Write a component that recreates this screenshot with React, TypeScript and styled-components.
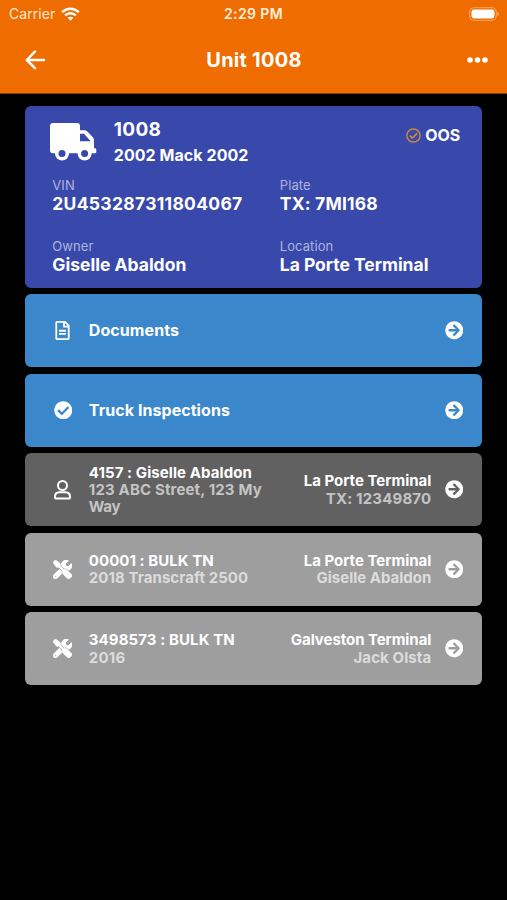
import React from "react";
import styled, { createGlobalStyle } from "styled-components";
import {
  FaArrowCircleRight,
  FaCheckCircle,
  FaRegCheckCircle,
  FaRegFileAlt,
  FaTools,
} from "react-icons/fa";

const GlobalStyle = createGlobalStyle`
  * { box-sizing: border-box; }
  html, body { margin: 0; background: #000; }
  body { font-family: Inter, "Liberation Sans", sans-serif; color: #fff; }
  svg { display: block; flex: none; }
`;

const Screen = styled.div`
  width: 507px;
  height: 900px;
  overflow: hidden;
  background: #000;
`;

const Header = styled.header`
  height: 94px;
  background: #ef6c00;
  border-bottom: 1px solid #8a4000;
`;

const StatusBar = styled.div`
  height: 27px;
  display: grid;
  grid-template-columns: 1fr auto 1fr;
  align-items: center;
  padding: 0 7px 0 9px;
`;

const Carrier = styled.div`
  display: flex;
  align-items: center;
  gap: 6px;
`;

const Battery = styled.div`
  justify-self: end;
`;

const NavBar = styled.div`
  height: 66px;
  display: grid;
  grid-template-columns: 1fr auto 1fr;
  align-items: center;
  padding: 0 19px 0 25px;
`;

const MenuDots = styled.div`
  justify-self: end;
`;

type TextProps = { $size: number; $weight?: number; $track?: number; $color?: string; $line?: number };

const Label = styled.span<TextProps>`
  display: block;
  width: fit-content;
  white-space: nowrap;
  font-size: ${(p) => p.$size}px;
  font-weight: ${(p) => p.$weight ?? 700};
  letter-spacing: ${(p) => p.$track ?? 0}px;
  color: ${(p) => p.$color ?? "#fff"};
  line-height: ${(p) => p.$line ?? 20}px;
`;

const StatusTime = styled(Label)`
  margin-right: 2px;
`;

const NavTitle = styled(Label)`
  margin-right: 5px;
`;

const Content = styled.main`
  display: flex;
  flex-direction: column;
  gap: 6.2px;
  padding: 12.2px 24.7px 0 25.3px;
`;

const UnitCard = styled.section`
  height: 181.7px;
  border-radius: 6px;
  background: #3949ab;
  padding: 13px 22px 0 24px;
`;

const UnitHead = styled.div`
  display: flex;
  height: 57px;
`;

const UnitName = styled.div`
  flex: 1;
  padding: 1px 0 0 16px;
`;

const Status = styled.div`
  display: flex;
  align-items: center;
  gap: 4px;
  height: 32px;
`;

const Fields = styled.div`
  display: grid;
  grid-template-columns: 227.5px 1fr;
  row-gap: 26px;
  padding-left: 3px;
`;

const Field = styled.div`
  height: 35px;
`;

const Row = styled.section<{ $bg: string }>`
  height: 73.3px;
  border-radius: 6px;
  background: ${(p) => p.$bg};
  display: flex;
  align-items: center;
  padding: 0 19px 0 27px;
`;

const RowIcon = styled.div`
  width: 21px;
  display: flex;
  justify-content: center;
`;

const RowMain = styled.div`
  flex: 1;
  padding-left: 15.5px;
`;

const RowSide = styled.div`
  display: flex;
  flex-direction: column;
  align-items: flex-end;
  margin-right: 13.5px;
`;

const ToolsIcon = styled(FaTools)`
  width: 19px;
  height: 19px;
  stroke: #fff;
  stroke-width: 22px;
  stroke-linejoin: round;
`;

const TruckIcon = styled.svg`
  margin: 4px 0 0 0.5px;
`;

const WifiIcon = () => (
  <svg width="19" height="14" viewBox="0 0 19 14" fill="none" stroke="#fff" strokeWidth="2.5">
    <path d="M1.2 5.2C6 .5 13 .5 17.8 5.2M4.2 8.4C7.2 5.5 11.8 5.5 14.8 8.4" />
    <path d="M9.5 13.7L6.6 10.8Q9.5 8.5 12.4 10.8Z" fill="#fff" stroke="none" />
  </svg>
);

const BatteryIcon = () => (
  <svg width="31" height="14" viewBox="0 0 31 14">
    <rect x=".7" y=".7" width="26.6" height="12.6" rx="4" fill="none" stroke="#fff" strokeOpacity=".4" />
    <rect x="2.5" y="2.5" width="23" height="9" rx="2.4" fill="#fff" />
    <path d="M28.5 4.8Q31.2 7 28.5 9.2Z" fill="#fff" fillOpacity=".5" />
  </svg>
);

const BackIcon = () => (
  <svg width="21" height="20" viewBox="0 0 21 20" fill="none" stroke="#fff" strokeWidth="2.5" strokeLinecap="round" strokeLinejoin="round">
    <path d="M10 1.5L1.8 10L10 18.2M2 10H19" />
  </svg>
);

const DotsIcon = () => (
  <svg width="21" height="6" viewBox="0 0 21 6" fill="#fff">
    <circle cx="3" cy="3" r="2.8" />
    <circle cx="10.5" cy="3" r="2.8" />
    <circle cx="18" cy="3" r="2.8" />
  </svg>
);

const Truck = () => (
  <TruckIcon width="48" height="39" viewBox="0 0 48 39" fill="#fff">
    <path
      fillRule="evenodd"
      d="M3 0H27Q30 0 30 3V7.3H34.2Q36 7.3 37.3 8.6L42.7 14Q44 15.3 44 17.1V25.3H45Q46.3 25.3 46.3 26.6V29Q46.3 30.3 45 30.3H3Q0 30.3 0 27.3V3Q0 0 3 0ZM30 10.8V18.3H40.7L34 10.8Z"
    />
    <circle cx="12" cy="30.5" r="7" />
    <circle cx="34.6" cy="30.5" r="7" />
    <circle cx="12" cy="30.5" r="3.5" fill="#3949ab" />
    <circle cx="34.6" cy="30.5" r="3.5" fill="#3949ab" />
  </TruckIcon>
);

const PersonIcon = () => (
  <svg width="18" height="20" viewBox="0 0 18 20" fill="none" stroke="#fff" strokeWidth="2" strokeLinejoin="round">
    <circle cx="8.5" cy="5.5" r="4.5" />
    <path d="M5.3 12.3H11.7Q16 12.6 16 16.6V17.4Q16 18.6 14.8 18.6H2.2Q1 18.6 1 17.4V16.6Q1 12.6 5.3 12.3Z" />
  </svg>
);

type Line = [text: string, track: number];

type Item = {
  icon: React.ReactNode;
  bg: string;
  title: Line;
  sub?: Line[];
  side?: [Line, Line];
  muted?: string;
  titleSize?: number;
};

const items: Item[] = [
  { icon: <FaRegFileAlt size={19} />, bg: "#3a87cc", title: ["Documents", 0.08], titleSize: 16 },
  { icon: <FaCheckCircle size={18.5} />, bg: "#3a87cc", title: ["Truck Inspections", 0.06], titleSize: 16 },
  {
    icon: <PersonIcon />,
    bg: "#616161",
    title: ["4157 : Giselle Abaldon", 0.08],
    sub: [["123 ABC Street, 123 My", 0.15], ["Way", -0.2]],
    side: [["La Porte Terminal", 0], ["TX: 12349870", 0.17]],
    muted: "#c4c4c4",
  },
  {
    icon: <ToolsIcon />,
    bg: "#9e9e9e",
    title: ["00001 : BULK TN", 0.05],
    sub: [["2018 Transcraft 2500", 0.07]],
    side: [["La Porte Terminal", 0], ["Giselle Abaldon", 0]],
    muted: "#dcdcdc",
  },
  {
    icon: <ToolsIcon />,
    bg: "#9e9e9e",
    title: ["3498573 : BULK TN", 0.1],
    sub: [["2016", 0.2]],
    side: [["Galveston Terminal", -0.06], ["Jack Olsta", 0.1]],
    muted: "#dcdcdc",
  },
];

const fields: { name: string; value: string; track: number }[] = [
  { name: "VIN", value: "2U453287311804067", track: 0.3 },
  { name: "Plate", value: "TX: 7MI168", track: 0.18 },
  { name: "Owner", value: "Giselle Abaldon", track: 0 },
  { name: "Location", value: "La Porte Terminal", track: -0.02 },
];

export default function App() {
  return (
    <Screen>
      <GlobalStyle />
      <Header>
        <StatusBar>
          <Carrier>
            <Label $size={14} $weight={400} $track={0.05} $color="#ffe9cf">Carrier</Label>
            <WifiIcon />
          </Carrier>
          <StatusTime $size={14} $weight={600} $track={0.4} $color="#fff0dd">2:29 PM</StatusTime>
          <Battery><BatteryIcon /></Battery>
        </StatusBar>
        <NavBar>
          <BackIcon />
          <NavTitle $size={20} $track={0.25}>Unit 1008</NavTitle>
          <MenuDots><DotsIcon /></MenuDots>
        </NavBar>
      </Header>
      <Content>
        <UnitCard>
          <UnitHead>
            <Truck />
            <UnitName>
              <Label $size={19} $track={0.3}>1008</Label>
              <Label $size={16} $line={31} $track={0.05}>2002 Mack 2002</Label>
            </UnitName>
            <Status>
              <FaRegCheckCircle size={15} color="#d08a3c" />
              <Label $size={16}>OOS</Label>
            </Status>
          </UnitHead>
          <Fields>
            {fields.map((f) => (
              <Field key={f.name}>
                <Label $size={13} $weight={400} $line={18} $track={0.08} $color="#adb4dd">{f.name}</Label>
                <Label $size={17.5} $line={20.5} $track={f.track}>{f.value}</Label>
              </Field>
            ))}
          </Fields>
        </UnitCard>
        {items.map((it) => (
          <Row key={it.title[0]} $bg={it.bg}>
            <RowIcon>{it.icon}</RowIcon>
            <RowMain>
              <Label $size={it.titleSize ?? 15} $line={17.2} $track={it.title[1]}>{it.title[0]}</Label>
              {it.sub?.map(([text, track]) => (
                <Label key={text} $size={15} $line={17.2} $track={track} $color={it.muted}>{text}</Label>
              ))}
            </RowMain>
            {it.side && (
              <RowSide>
                <Label $size={15} $line={17.2} $track={it.side[0][1]}>{it.side[0][0]}</Label>
                <Label $size={15} $line={17.2} $track={it.side[1][1]} $color={it.muted}>{it.side[1][0]}</Label>
              </RowSide>
            )}
            <FaArrowCircleRight size={18.5} />
          </Row>
        ))}
      </Content>
    </Screen>
  );
}
